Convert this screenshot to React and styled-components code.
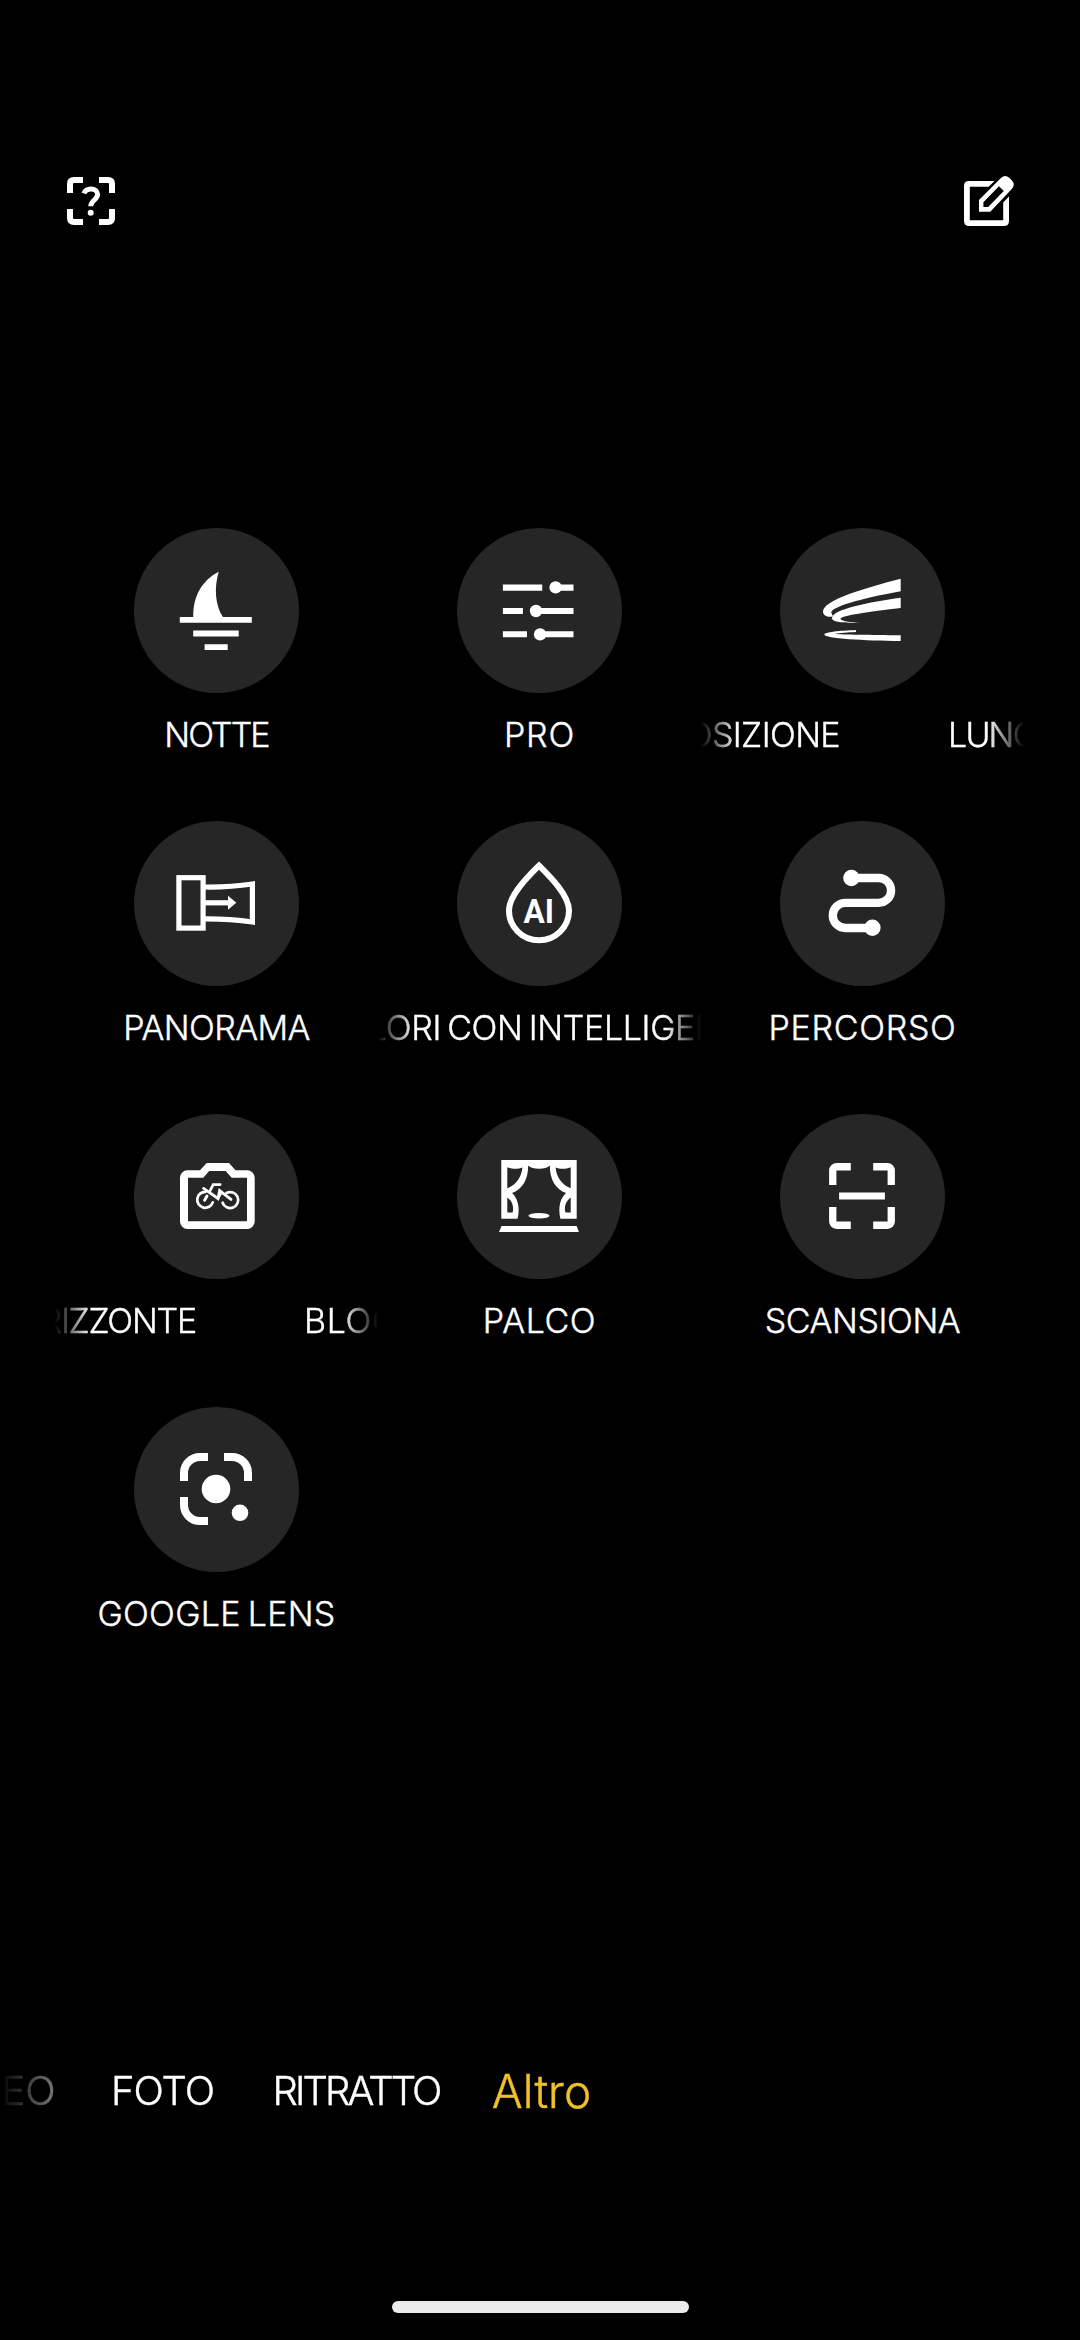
import React from "react";
import styled, { createGlobalStyle, css } from "styled-components";

const bikeStroke = { fill: "none", stroke: "#fff", strokeLinecap: "round" };

// every mode icon is drawn on a 165x165 board, the size of its circle
const NightIcon = () => (
  <svg viewBox="0 0 165 165" fill="#fff">
    <path d="M59.3 89.5C58.8 68 68 52.5 84.7 43.7C80 60 81 77 89.2 89.5z" />
    <path d="M45.8 89H117.8V94.7H45.8zM59.2 102.4H104.7V108.4H59.2zM70.6 116.2H93.7V122H70.6z" />
  </svg>
);

const ProIcon = () => (
  <svg viewBox="0 0 165 165" fill="#fff">
    <path d="M45.9 56.4H85.2V62.7H45.9zM98 56.4H116.5V62.7H98z" />
    <path d="M45.9 80H65.9V86H45.9zM79 80H116.5V86H79z" />
    <path d="M45.9 103.3H70V109.3H45.9zM83 103.3H116.5V109.3H83z" />
    <circle cx="98.6" cy="59.4" r="6.2" />
    <circle cx="79" cy="83" r="6.2" />
    <circle cx="83.1" cy="106.4" r="6.2" />
  </svg>
);

const LongExposureIcon = () => (
  <svg viewBox="0 0 165 165" fill="#fff">
    <path d="M120.7 50.7C85 60 43 72 43 83.5C43 87 47 90 53 88.2L51.2 84.5C52 79 78 71 120.7 63.3z" />
    <path d="M120.7 69.7C90 74 52 81 52 90.3C52 94 62 95.3 80 94.9C70 94.3 61 93 60.5 91C60 88 85 84 120.7 80z" />
    <path d="M76 101.9C60 102.6 44.3 104 44.3 106.4C44.3 110.5 85 112.5 120.7 113V107.2C90 106.8 62 106.5 55 105.9C60 104.9 68 104.4 76 104z" />
  </svg>
);

const PanoramaIcon = () => (
  <svg viewBox="0 0 165 165" fill="none" stroke="#fff" strokeWidth="5.2">
    <rect x="44.9" y="56.7" width="24.2" height="50.4" />
    <path d="M70 66C88 66.3 103 65.3 118.4 63V101C103 98.7 88 97.7 70 97.8" />
    <path d="M70 81.8H95" />
    <path d="M94 74.7L102.3 81.8L94 88.7z" fill="#fff" stroke="none" />
  </svg>
);

const AiColorIcon = () => (
  <svg viewBox="0 0 165 165" fill="none">
    <path
      d="M82 44.6C72 54.5 52 74 52 89.5C52 106 65.5 119.3 82 119.3C98.5 119.3 112 106 112 89.5C112 74 92 54.5 82 44.6z"
      stroke="#fff"
      strokeWidth="6"
    />
    <text
      x="66.6"
      y="102"
      fill="#fff"
      fontFamily="Roboto, sans-serif"
      fontWeight="700"
      fontSize="33.5"
      textLength="30.5"
      lengthAdjust="spacingAndGlyphs"
    >
      AI
    </text>
  </svg>
);

const RouteIcon = () => (
  <svg viewBox="0 0 165 165">
    <path
      d="M71 57H98.7A12.3 12.3 0 0 1 98.7 81.8H65.4A12.6 12.6 0 0 0 65.4 107H92"
      fill="none"
      stroke="#fff"
      strokeWidth="8.3"
    />
    <circle cx="71.4" cy="57" r="8.2" fill="#fff" />
    <circle cx="92.4" cy="106.8" r="8.2" fill="#fff" />
  </svg>
);

const HorizonLockIcon = () => (
  <svg viewBox="0 0 165 165">
    <path
      fill="#fff"
      fillRule="evenodd"
      d="M53.5 56.3H66L72.7 49H95L101.5 56.3H113.2A7.5 7.5 0 0 1 120.7 63.8V107.5A7.5 7.5 0 0 1 113.2 115H53.5A7.5 7.5 0 0 1 46 107.5V63.8A7.5 7.5 0 0 1 53.5 56.3zM54 63.8V107.3H113V63.8H97.7L91.6 57H75.2L69.3 63.8z"
    />
    <path {...bikeStroke} strokeWidth="2.7" d="M71.6 77.8A8 8 0 1 0 78.8 88.4" />
    <path {...bikeStroke} strokeWidth="2.7" d="M92.6 78.9A8 8 0 1 1 88.6 88.7" />
    <path {...bikeStroke} strokeWidth="2.8" d="M69.6 74.4L84 84.6L85.6 76.6L97 85.4" />
    <path {...bikeStroke} strokeWidth="2.7" d="M75.6 77.6L79.2 70.6H86.2" />
    <path {...bikeStroke} strokeWidth="3" d="M73 82L70.6 86.2" />
    <path d="M77 78L84.6 83.6L85.6 76.6L88 80L84.5 86z" fill="#fff" />
  </svg>
);

const Curtain = () => (
  <path
    fillRule="evenodd"
    d="M44.3 46H82V54.8C77 54.8 73.5 53.6 71.2 51.5C71.2 66 65 75.5 55 79C60 83.5 63.5 92 60.6 104.7H44.3zM50.3 53.2V74.3C59 71 64.5 63.5 65.4 53.6C61 55.4 55 55.3 50.3 53.2zM50.3 83.5V98.6H55.6C57 92.5 55.5 87.5 50.3 83.5z"
  />
);

const StageIcon = () => (
  <svg viewBox="0 0 165 165" fill="#fff">
    <Curtain />
    <g transform="matrix(-1 0 0 1 164 0)">
      <Curtain />
    </g>
    <ellipse cx="82" cy="101.8" rx="10.6" ry="2.8" />
    <path d="M44.5 112H119.7L121.9 118H42z" />
  </svg>
);

const ScanIcon = () => (
  <svg viewBox="0 0 165 165" fill="#fff">
    <path d="M70.8 49H56.5A7.4 7.4 0 0 0 49.1 56.4V71H56.4V56.4H70.8z" />
    <path d="M93.2 49H107.5A7.4 7.4 0 0 1 114.9 56.4V71H107.6V56.4H93.2z" />
    <path d="M70.8 115H56.5A7.4 7.4 0 0 1 49.1 107.6V93H56.4V107.6H70.8z" />
    <path d="M93.2 115H107.5A7.4 7.4 0 0 0 114.9 107.6V93H107.6V107.6H93.2z" />
    <path d="M59.1 78.5H104.9V85.5H59.1z" />
  </svg>
);

const LensIcon = () => (
  <svg viewBox="0 0 165 165" fill="none" stroke="#fff" strokeWidth="8">
    <path d="M74 50H66A16 16 0 0 0 50 66V74" />
    <path d="M90 50H98A16 16 0 0 1 114 66V74" />
    <path d="M50 90V98A16 16 0 0 0 66 114H74" />
    <circle cx="82" cy="82" r="14.3" fill="#fff" stroke="none" />
    <circle cx="106" cy="105.8" r="8.3" fill="#fff" stroke="none" />
  </svg>
);

const HelpScanIcon = () => (
  <svg width="48" height="48" viewBox="0 0 48 48" fill="none" stroke="#fff">
    <path
      strokeWidth="6"
      d="M16 3H7Q3 3 3 7V16M32 3H41Q45 3 45 7V16M16 45H7Q3 45 3 41V32M32 45H41Q45 45 45 41V32"
    />
    <path
      strokeWidth="5"
      d="M16.8 16.4C18 13.4 20.6 11.9 24 11.9C28 11.9 30.6 14.4 30.6 17.6C30.6 22.6 23.7 23.6 23.7 29.3"
    />
    <circle cx="23.7" cy="35.7" r="3" fill="#fff" stroke="none" />
  </svg>
);

const EditIcon = () => (
  <svg width="58" height="58" viewBox="0 0 58 58" fill="#fff">
    <path d="M34.5 9H9Q4 9 4 14V49Q4 54 9 54H44Q49 54 49 49V24.6L43.2 30.4V48.2H9.8V14.8H28.7z" />
    <path
      fillRule="evenodd"
      d="M19 39.7V28L41.2 5.8Q45.2 2 49.2 5.8L51.9 8.5Q55.6 12.5 51.8 16.9L30.3 39.7zM23.4 35V30.2L39 14.3L43.8 18.9L28.2 35z"
    />
  </svg>
);

const modes = [
  { name: "NOTTE", icon: <NightIcon />, spacing: -1.9 },
  { name: "PRO", icon: <ProIcon />, spacing: 0.8 },
  { name: "LUNGA ESPOSIZIONE", icon: <LongExposureIcon />, spacing: -0.6, headSpacing: -1.8, tail: 139 },
  { name: "PANORAMA", icon: <PanoramaIcon />, spacing: -0.6 },
  { name: "COLORI CON INTELLIGENZA ARTIFICIALE", icon: <AiColorIcon />, spacing: -0.35, shift: -60 },
  { name: "PERCORSO", icon: <RouteIcon />, spacing: 0.7 },
  { name: "BLOCCO ORIZZONTE", icon: <HorizonLockIcon />, spacing: -1.2, headSpacing: 0.6, tail: 141 },
  { name: "PALCO", icon: <StageIcon />, spacing: 0.6 },
  { name: "SCANSIONA", icon: <ScanIcon />, spacing: -0.4 },
  { name: "GOOGLE LENS", icon: <LensIcon />, spacing: 0.3 },
];

const tabs = [
  { name: "VIDEO", width: 55.5, align: "flex-end" },
  { name: "FOTO", width: 214, spacing: -1 },
  { name: "RITRATTO", width: 173, spacing: -2.9 },
  { name: "Altro", width: 198, active: true },
];

function ModeLabel({ mode }) {
  if (mode.tail) {
    // the name has scrolled: its end is leaving on the left, its start comes in again
    return (
      <Marquee $spacing={mode.spacing}>
        <MarqueeTail $width={mode.tail}>
          <span>{mode.name}</span>
        </MarqueeTail>
        <MarqueeHead $spacing={mode.headSpacing}>{mode.name}</MarqueeHead>
      </Marquee>
    );
  }
  if (mode.shift) {
    return (
      <Marquee $spacing={mode.spacing}>
        <MarqueeText $shift={mode.shift}>{mode.name}</MarqueeText>
      </Marquee>
    );
  }
  return <Label $spacing={mode.spacing}>{mode.name}</Label>;
}

export default function App() {
  return (
    <Screen>
      <GlobalStyle />
      <Header>
        <HelpScanIcon />
        <EditIcon />
      </Header>

      <ModeGrid>
        {modes.map((mode) => (
          <Mode key={mode.name}>
            <ModeCircle>{mode.icon}</ModeCircle>
            <ModeLabel mode={mode} />
          </Mode>
        ))}
      </ModeGrid>

      <Tabs>
        {tabs.map((tab) => (
          <Tab
            key={tab.name}
            $width={tab.width}
            $align={tab.align}
            $spacing={tab.spacing}
            $active={tab.active}
          >
            {tab.name}
          </Tab>
        ))}
      </Tabs>

      <HomeBar />
    </Screen>
  );
}

const GlobalStyle = createGlobalStyle`
  body {
    margin: 0;
    background: #000;
  }
`;

const Screen = styled.div`
  box-sizing: border-box;
  display: flex;
  flex-direction: column;
  width: 1080px;
  height: 2340px;
  padding-top: 172px;
  overflow: hidden;
  background: #000;
  color: #fff;
  font-family: Inter, sans-serif;
  font-weight: 360;
`;

const Header = styled.header`
  display: flex;
  align-items: center;
  justify-content: space-between;
  height: 58px;
  padding: 0 62px 0 67px;
`;

const ModeGrid = styled.div`
  display: grid;
  grid-template-columns: repeat(3, 323px);
  row-gap: 66px;
  margin: 298px 0 0 55px;
`;

const Mode = styled.div`
  display: flex;
  flex-direction: column;
  align-items: center;
  gap: 22px;
  min-width: 0;
`;

const ModeCircle = styled.div`
  width: 165px;
  height: 165px;
  border-radius: 50%;
  background: #262626;

  svg {
    display: block;
  }
`;

const labelText = css`
  height: 40px;
  font-size: 34px;
  line-height: 40px;
  letter-spacing: ${(p) => p.$spacing || 0}px;
  word-spacing: -3px;
  white-space: nowrap;
  -webkit-text-stroke: 0.4px;
`;

const Label = styled.div`
  ${labelText}
`;

const Marquee = styled.div`
  ${labelText}
  display: flex;
  gap: 108px;
  width: 100%;
  overflow: hidden;
  mask-image: linear-gradient(
    to right,
    transparent,
    #000 36px,
    #000 calc(100% - 36px),
    transparent
  );
`;

const MarqueeTail = styled.div`
  display: flex;
  flex: none;
  justify-content: flex-end;
  width: ${(p) => p.$width}px;
  overflow: hidden;
`;

const MarqueeHead = styled.span`
  letter-spacing: ${(p) => p.$spacing}px;
`;

const MarqueeText = styled.span`
  margin-left: ${(p) => p.$shift}px;
`;

const Tabs = styled.nav`
  display: flex;
  height: 60px;
  margin-top: 427px;
  mask-image: linear-gradient(to right, transparent, #000 115px);
`;

const Tab = styled.div`
  display: flex;
  flex: none;
  justify-content: ${(p) => p.$align || "center"};
  width: ${(p) => p.$width}px;
  color: ${(p) => (p.$active ? "#f0c02a" : "#fff")};
  font-size: ${(p) => (p.$active ? 46 : 40)}px;
  line-height: ${(p) => (p.$active ? 61 : 60)}px;
  letter-spacing: ${(p) => p.$spacing || 0}px;
  -webkit-text-stroke: 0.4px;
`;

const HomeBar = styled.div`
  align-self: center;
  width: 297px;
  height: 12px;
  margin-top: 180px;
  border-radius: 6px;
  background: #ebebeb;
`;
